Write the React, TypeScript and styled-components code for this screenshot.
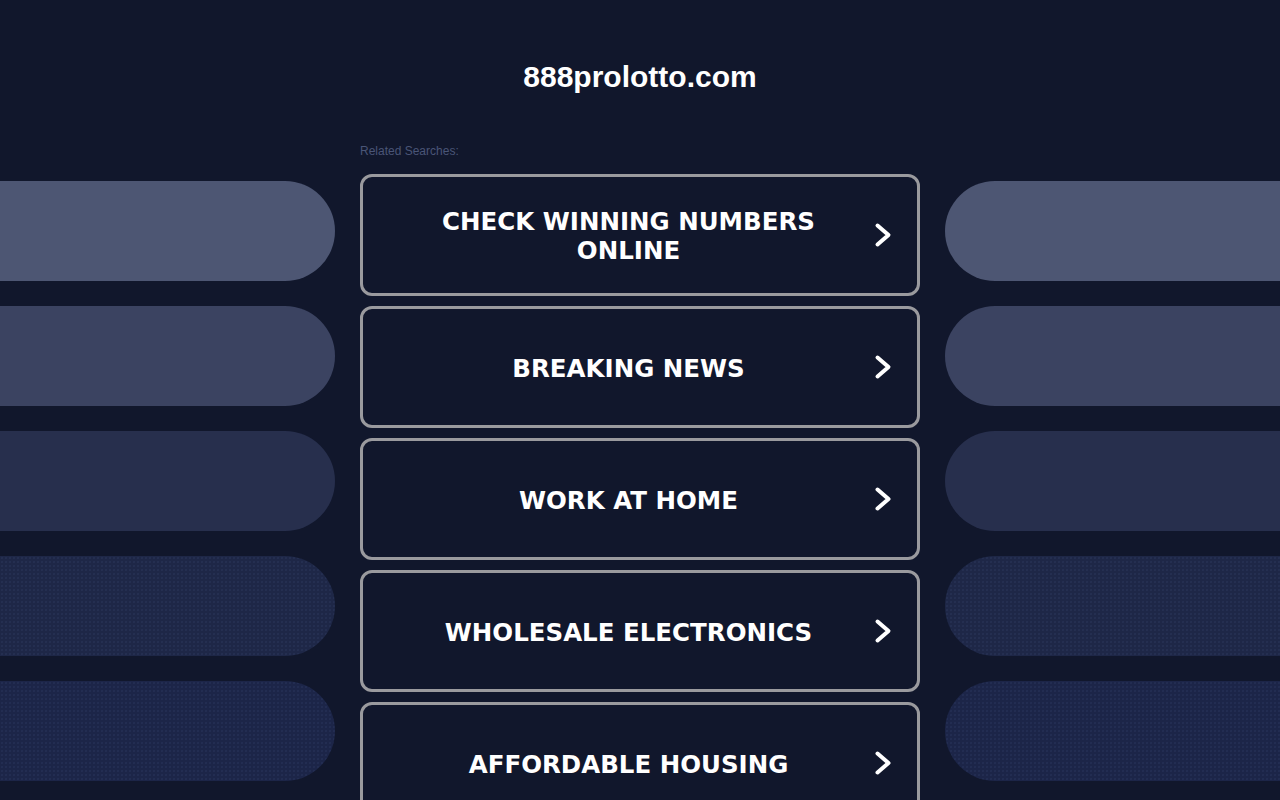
import styled, { createGlobalStyle } from 'styled-components';

const links = [
    'Check Winning Numbers Online',
    'Breaking News',
    'Work At Home',
    'Wholesale Electronics',
    'Affordable Housing',
];

const pillShades = ['#4d5673', '#3b4361', '#272f4d', '#1e2747', '#1c2548'];

const GlobalStyle = createGlobalStyle`
    html, body {
        margin: 0;
        padding: 0;
        background: #11172c;
        overflow: hidden;
    }
`;

const Chevron = () => (
    <svg width="18" height="26" viewBox="0 0 18 26" fill="none">
        <path d="M3.5 3.5 L14.5 13 L3.5 22.5" stroke="#fff" strokeWidth="4" strokeLinecap="round" strokeLinejoin="round" />
    </svg>
);

const App = () => {
    return (
        <>
            <GlobalStyle />
            <Page>
                <Side $side="left">
                    {pillShades.map((shade, i) => (
                        <Pill key={i} $side="left" $color={shade} $dotted={i >= 3} />
                    ))}
                </Side>
                <Main>
                    <Title>888prolotto.com</Title>
                    <Related>Related Searches:</Related>
                    <LinkList>
                        {links.map(label => (
                            <LinkButton key={label} href="#">
                                <LinkText>{label}</LinkText>
                                <Chevron />
                            </LinkButton>
                        ))}
                    </LinkList>
                </Main>
                <Side $side="right">
                    {pillShades.map((shade, i) => (
                        <Pill key={i} $side="right" $color={shade} $dotted={i >= 3} />
                    ))}
                </Side>
            </Page>
        </>
    );
};

const Page = styled.div`
    display: grid;
    grid-template-columns: 335px 560px 335px;
    column-gap: 25px;
    height: 800px;
    overflow: hidden;
`;

const Side = styled.div<{ $side: 'left' | 'right' }>`
    display: flex;
    flex-direction: column;
    gap: 25px;
    padding-top: 181px;
`;

const Pill = styled.div<{ $side: 'left' | 'right'; $color: string; $dotted: boolean }>`
    height: 100px;
    flex-shrink: 0;
    background-color: ${p => p.$color};
    border-radius: ${p => (p.$side === 'left' ? '0 50px 50px 0' : '50px 0 0 50px')};
    background-image: ${p =>
        p.$dotted ? 'radial-gradient(rgba(90, 110, 160, 0.14) 0.6px, transparent 1px)' : 'none'};
    background-size: 4px 4px;
`;

const Main = styled.div`
    display: flex;
    flex-direction: column;
    padding-top: 60px;
`;

const Title = styled.h1`
    margin: 0;
    text-align: center;
    font-family: "Liberation Sans", Arial, sans-serif;
    font-size: 30px;
    line-height: 34px;
    font-weight: 700;
    color: #fff;
`;

const Related = styled.div`
    margin-top: 50px;
    font-family: "Liberation Sans", Arial, sans-serif;
    font-size: 12px;
    line-height: 14px;
    color: #4a5577;
`;

const LinkList = styled.div`
    display: flex;
    flex-direction: column;
    gap: 10px;
    margin-top: 16px;
`;

const LinkButton = styled.a`
    display: flex;
    align-items: center;
    gap: 15px;
    box-sizing: border-box;
    height: 122px;
    padding: 0 25px 0 35px;
    border: 3px solid #9a9a9e;
    border-radius: 12px;
    text-decoration: none;
    flex-shrink: 0;
`;

const LinkText = styled.span`
    flex: 1;
    padding-top: 2px;
    text-align: center;
    font-family: "DejaVu Sans", Verdana, sans-serif;
    font-size: 24.5px;
    line-height: 29px;
    font-weight: 700;
    text-transform: uppercase;
    color: #fff;
`;

export default App;
